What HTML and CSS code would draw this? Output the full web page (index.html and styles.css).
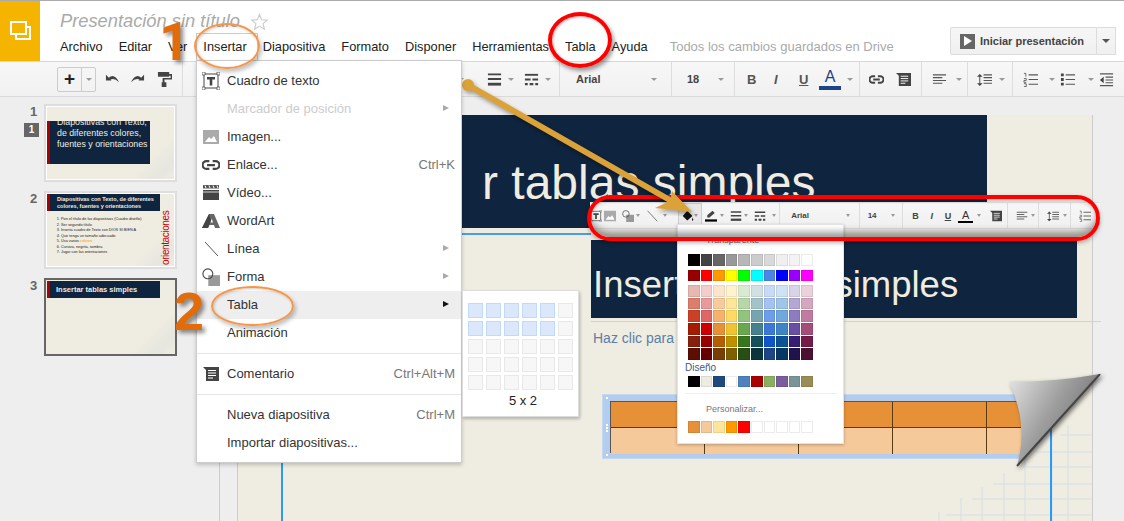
FILE: index.html
```html
<!DOCTYPE html>
<html>

<head>
    <meta charset="utf-8">
    <title>Presentación sin título</title>
    <link rel="stylesheet" href="styles.css">
</head>

<body>

    <svg class="sprites" width="0" height="0">
        <symbol id="i-undo" viewBox="0 0 16 16"><path d="M1 9 L1 3 L7 9 Z M4 6 Q10 1 15 11 Q10 6 6 8 Z" fill="#444"/></symbol>
        <symbol id="i-redo" viewBox="0 0 16 16"><path d="M15 9 L15 3 L9 9 Z M12 6 Q6 1 1 11 Q6 6 10 8 Z" fill="#444"/></symbol>
        <symbol id="i-paint" viewBox="0 0 16 16"><path d="M1 0H13V5H1Z M13 2H16V8H8V11H10V16H5V11H6V6.500H14.500V4H13Z" fill="#444"/></symbol>
        <symbol id="i-link" viewBox="0 0 16 16"><path d="M6.500 4.500H4a3.500 3.500 0 0 0 0 7h2.500 M9.500 4.500H12a3.500 3.500 0 0 1 0 7H9.500 M4.500 8h7" fill="none" stroke="#444" stroke-width="2"/></symbol>
        <symbol id="i-comment" viewBox="0 0 16 16"><path d="M0 1H16V15H3V4Z" fill="#444"/><path d="M5 4.500H13 M5 7H13 M5 9.500H13 M5 12H10" stroke="#fff"/></symbol>
        <symbol id="i-align" viewBox="0 0 16 16"><path d="M1 3H15 M1 6H11 M1 9H15 M1 12H11" stroke="#555" stroke-width="1.200"/></symbol>
        <symbol id="i-spacing" viewBox="0 0 16 16"><path d="M3 2L6 5H0Z M3 15L0 12H6Z M2.500 4H3.500V13H2.500Z" fill="#444"/><path d="M7 3H16 M7 6H16 M7 9H16 M7 12H16" stroke="#555" stroke-width="1.200"/></symbol>
        <symbol id="i-numlist" viewBox="0 0 16 16"><path d="M1 1.500H3V5 M1 7H3.500V9H1V11H3.500 M1 12.500H3.500V15.500H1" fill="none" stroke="#444" stroke-width=".8"/><path d="M6 3H16 M6 8H16 M6 13H16" stroke="#555" stroke-width="1.200"/></symbol>
        <symbol id="i-bullets" viewBox="0 0 16 16"><path d="M1 1.500H4V4.500H1Z M1 6.500H4V9.500H1Z M1 11.500H4V14.500H1Z" fill="#444"/><path d="M6 3H16 M6 8H16 M6 13H16" stroke="#555" stroke-width="1.200"/></symbol>
        <symbol id="i-indent" viewBox="0 0 16 16"><path d="M1 2H15 M7 5.500H15 M7 8.500H15 M7 11.500H15 M1 14.500H15" stroke="#555" stroke-width="1.200"/><path d="M5 5V12L1 8.500Z" fill="#444"/></symbol>
        <symbol id="i-weight" viewBox="0 0 16 16"><path d="M1 2.500H15 M1 7.500H15" stroke="#444" stroke-width="2"/><path d="M1 13H15" stroke="#444" stroke-width="3"/></symbol>
        <symbol id="i-dash" viewBox="0 0 16 16"><path d="M1 3H15" stroke="#444" stroke-width="2"/><path d="M1 8H7 M9 8H15" stroke="#444" stroke-width="2"/><path d="M1 13H4 M6 13H10 M12 13H15" stroke="#444" stroke-width="2.500"/></symbol>
        <symbol id="i-fill" viewBox="0 0 16 16"><path d="M7 1L14 8L7 14L1 8Z" fill="#111"/><path d="M14 10Q16 13 14.500 14.500Q12.500 13.500 14 10Z" fill="#111"/></symbol>
        <symbol id="i-pen" viewBox="0 0 16 16"><path d="M10 1L13 4L6 10H3V7Z" fill="#444"/><path d="M0 12.500H16V15.500H0Z" fill="#000"/></symbol>
        <symbol id="i-image" viewBox="0 0 16 16"><path d="M0 1H16V15H0Z" fill="#aaa"/><path d="M2 13L6 8L8 10L11 7L14 13Z" fill="#fff"/></symbol>
        <symbol id="i-shape" viewBox="0 0 20 20"><path d="M7 8H20V20H7Z" fill="#999"/><circle cx="6.500" cy="6.500" r="5.500" fill="none" stroke="#444" stroke-width="1.200"/></symbol>
        <symbol id="i-line" viewBox="0 0 16 16"><path d="M2 1L15 15" stroke="#555" stroke-width="1"/></symbol>
        <symbol id="i-textbox" viewBox="0 0 18 18"><path d="M2 2H16V16H2Z" fill="none" stroke="#444"/><path d="M0 0H3V3H0Z M15 0H18V3H15Z M0 15H3V18H0Z M15 15H18V18H15Z" fill="#fff" stroke="#444" stroke-width=".7"/><path d="M5 5H13V7.500H10.300V13.500H7.700V7.500H5Z" fill="#444"/></symbol>
        <symbol id="i-video" viewBox="0 0 16 16"><path d="M0 0H16V3.500H0Z" fill="#555"/><path d="M2 .5L3 3M6 .5L7 3M10 .5L11 3M14 .5L15 3" stroke="#fff"/><path d="M0 5H16V15H0Z" fill="#444"/><path d="M0 7H16" stroke="#fff" stroke-width=".8"/></symbol>
        <symbol id="i-wordart" viewBox="0 0 18 16"><path d="M0 15L7 1H12L18 15H13L12 12H7.500L6 15Z" fill="#666"/><path d="M8.500 9.500H11L9.700 5.500Z" fill="#fff"/><path d="M6 15L9 7L7 1L0 15Z" fill="#444"/></symbol>
    </svg>

    <div class="app">
        <header class="header">
            <div class="logo">
                <svg width="22" height="22" viewBox="0 0 22 22"><path d="M2 2H17V14H2Z M17 7H21V19H7V14" fill="none" stroke="#fff" stroke-width="2"/></svg>
            </div>
            <div class="header-main">
                <div class="doc-title">
                    <span class="doc-name">Presentación sin título</span>
                    <svg class="star" width="17" height="17" viewBox="0 0 24 24"><path d="M12 2L15 9.500L23 10L17 15L19 23L12 18.500L5 23L7 15L1 10L9 9.500Z" fill="none" stroke="#ccc" stroke-width="1.600"/></svg>
                </div>
                <nav class="menubar">
                    <span>Archivo</span>
                    <span>Editar</span>
                    <span>Ver</span>
                    <span class="open">Insertar</span>
                    <span>Diapositiva</span>
                    <span>Formato</span>
                    <span>Disponer</span>
                    <span>Herramientas</span>
                    <span>Tabla</span>
                    <span>Ayuda</span>
                    <span class="saved">Todos los cambios guardados en Drive</span>
                </nav>
            </div>
            <div class="present">
                <div class="present-btn">
                    <span class="play"></span>
                    Iniciar presentación
                </div>
                <div class="present-more"><span class="caret dark"></span></div>
            </div>
        </header>

        <div class="toolbar">
            <div class="tgroup g-edit">
                <div class="new-btn">
                    <span class="plus">+</span>
                    <span class="new-more"><span class="caret"></span></span>
                </div>
                <svg class="ico undo"><use href="#i-undo"/></svg>
                <svg class="ico redo"><use href="#i-redo"/></svg>
                <svg class="ico paint"><use href="#i-paint"/></svg>
            </div>
            <div class="tgroup g-insert">
                <span class="tb w14"><svg class="ico"><use href="#i-pen"/></svg></span>
                <span class="tb w28"><span class="caret"></span></span>
                <span class="tb w37"><svg class="ico"><use href="#i-weight"/></svg><span class="caret"></span></span>
                <span class="tb w37"><svg class="ico"><use href="#i-dash"/></svg><span class="caret"></span></span>
            </div>
            <div class="tgroup g-font"><span>Arial</span><span class="caret"></span></div>
            <div class="tgroup g-size"><span>18</span><span class="caret"></span></div>
            <div class="tgroup g-text">
                <b class="fmt">B</b>
                <i class="fmt serif">I</i>
                <u class="fmt">U</u>
                <span class="color-a">A<span class="color-bar"></span></span>
                <span class="caret"></span>
            </div>
            <div class="tgroup g-link">
                <svg class="ico"><use href="#i-link"/></svg>
                <svg class="ico"><use href="#i-comment"/></svg>
            </div>
            <div class="tgroup g-align"><svg class="ico"><use href="#i-align"/></svg><span class="caret"></span></div>
            <div class="tgroup g-spacing"><svg class="ico"><use href="#i-spacing"/></svg><span class="caret"></span></div>
            <div class="tgroup g-lists">
                <span class="tb w37"><svg class="ico"><use href="#i-numlist"/></svg><span class="caret"></span></span>
                <span class="tb w39"><svg class="ico"><use href="#i-bullets"/></svg><span class="caret"></span></span>
                <svg class="ico"><use href="#i-indent"/></svg>
            </div>
        </div>

        <div class="workspace">
            <aside class="filmstrip">
                <div class="film-row">
                    <span class="film-num">1</span>
                    <span class="film-flag">1</span>
                    <div class="thumb">
                        <div class="thumb-band band-one">
                            <p>Diapositivas con Texto,<br>de diferentes colores,<br>fuentes y orientaciones</p>
                        </div>
                    </div>
                </div>
                <div class="film-row">
                    <span class="film-num">2</span>
                    <div class="thumb">
                        <div class="thumb-band band-two">
                            <p>Diapositivas con Texto, de diferentes<br>colores, fuentes y orientaciones</p>
                        </div>
                        <ol class="thumb-list">
                            <li>Pon el título de las diapositivas (Cuadro diseño)</li>
                            <li>Ser segundo título</li>
                            <li>Inserta cuadro de Texto con DIOS SI BIEN A</li>
                            <li>Que tenga un tamaño adecuado</li>
                            <li>Usa varios <em>colores</em></li>
                            <li>Cursiva, negrita, sombra</li>
                            <li>Jugar con las orientaciones</li>
                        </ol>
                        <span class="thumb-side">orientaciones</span>
                    </div>
                </div>
                <div class="film-row">
                    <span class="film-num">3</span>
                    <div class="thumb current">
                        <div class="thumb-band band-three">
                            <p>Insertar tablas simples</p>
                        </div>
                    </div>
                </div>
            </aside>

            <main class="canvas">
                <div class="slide">
                    <div class="band-big">r tablas simples</div>
                    <div class="guide-h"></div>
                    <div class="band-small">Insertar tablas simples</div>
                    <div class="rule"></div>
                    <div class="placeholder">Haz clic para añadir texto</div>
                    <svg class="grid" width="160" height="110" viewBox="0 0 160 110">
                        <path d="M129 10H160 M104 27H160 M91 42H160 M61 59H160 M40 74H160 M14 90H160 M136 0V110 M120 10V110 M93 28V110 M72 48V110 M50 62V110 M29 73V110 M7 87V110" stroke="#d5dfe4" fill="none"/>
                    </svg>
                    <div class="guide-v left"></div>
                    <div class="guide-v right"></div>
                    <div class="table-frame">
                        <div class="table-grid">
                            <span class="th"></span><span class="th"></span><span class="th"></span><span class="th"></span><span class="th"></span>
                            <span class="td"></span><span class="td"></span><span class="td"></span><span class="td"></span><span class="td"></span>
                        </div>
                    </div>
                </div>
            </main>
        </div>

        <svg class="curl" width="100" height="104" viewBox="0 0 100 104">
            <defs>
                <linearGradient id="curlfill" x1="0" y1="0" x2="1" y2="0.6">
                    <stop offset="0" stop-color="#e6e6e6"/>
                    <stop offset="0.5" stop-color="#a0a0a0"/>
                    <stop offset="1" stop-color="#666"/>
                </linearGradient>
            </defs>
            <path d="M8 8Q54 8 99 0L16 92Q28 50 8 8Z" fill="url(#curlfill)"/>
            <path d="M99 0L16 92" stroke="#444" stroke-width="2"/>
        </svg>

        <div class="mini-toolbar">
            <span class="mb w11"><svg class="mico"><use href="#i-textbox"/></svg></span>
            <span class="mb w18"><svg class="mico"><use href="#i-image"/></svg></span>
            <span class="mb w24"><svg class="mico"><use href="#i-shape"/></svg><span class="caret"></span></span>
            <span class="mb w27"><svg class="mico"><use href="#i-line"/></svg><span class="caret"></span></span>
            <span class="mb w24 pressed"><svg class="mico"><use href="#i-fill"/></svg><span class="caret"></span></span>
            <span class="mb w25"><svg class="mico"><use href="#i-pen"/></svg><span class="caret"></span></span>
            <span class="mb w25"><svg class="mico"><use href="#i-weight"/></svg><span class="caret"></span></span>
            <span class="mb w29 sep"><svg class="mico"><use href="#i-dash"/></svg><span class="caret"></span></span>
            <span class="mb mfont sep"><span>Arial</span><span class="caret"></span></span>
            <span class="mb msize sep"><span>14</span><span class="caret"></span></span>
            <span class="mb mtext sep">
                <b class="mfmt">B</b><i class="mfmt">I</i><u class="mfmt">U</u>
                <span class="color-a mini">A<span class="color-bar"></span></span>
                <span class="caret"></span>
                <svg class="mico mcomment"><use href="#i-comment"/></svg>
            </span>
            <span class="mb w32 sep"><svg class="mico ml"><use href="#i-align"/></svg><span class="caret"></span></span>
            <span class="mb w32 sep"><svg class="mico ml"><use href="#i-spacing"/></svg><span class="caret"></span></span>
            <span class="mb w29"><svg class="mico ml"><use href="#i-numlist"/></svg></span>
        </div>

        <div class="palette">
            <div class="pal-none">Transparente</div>
            <div class="swatches">
                <i style="background:#000"></i><i style="background:#434343"></i><i style="background:#666"></i><i style="background:#999"></i><i style="background:#b7b7b7"></i><i style="background:#ccc"></i><i style="background:#d9d9d9"></i><i style="background:#efefef"></i><i style="background:#f3f3f3"></i><i style="background:#fff"></i>
            </div>
            <div class="swatches bright">
                <i style="background:#980000"></i><i style="background:#f00"></i><i style="background:#f90"></i><i style="background:#ff0"></i><i style="background:#0f0"></i><i style="background:#0ff"></i><i style="background:#4a86e8"></i><i style="background:#00f"></i><i style="background:#90f"></i><i style="background:#f0f"></i>
            </div>
            <div class="swatches tints">
                <i style="background:#e6b8af"></i><i style="background:#f4cccc"></i><i style="background:#fce5cd"></i><i style="background:#fff2cc"></i><i style="background:#d9ead3"></i><i style="background:#d0e0e3"></i><i style="background:#c9daf8"></i><i style="background:#cfe2f3"></i><i style="background:#d9d2e9"></i><i style="background:#ead1dc"></i>
                <i style="background:#dd7e6b"></i><i style="background:#ea9999"></i><i style="background:#f9cb9c"></i><i style="background:#ffe599"></i><i style="background:#b6d7a8"></i><i style="background:#a2c4c9"></i><i style="background:#a4c2f4"></i><i style="background:#9fc5e8"></i><i style="background:#b4a7d6"></i><i style="background:#d5a6bd"></i>
                <i style="background:#cc4125"></i><i style="background:#e06666"></i><i style="background:#f6b26b"></i><i style="background:#ffd966"></i><i style="background:#93c47d"></i><i style="background:#76a5af"></i><i style="background:#6d9eeb"></i><i style="background:#6fa8dc"></i><i style="background:#8e7cc3"></i><i style="background:#c27ba0"></i>
                <i style="background:#a61c00"></i><i style="background:#c00"></i><i style="background:#e69138"></i><i style="background:#f1c232"></i><i style="background:#6aa84f"></i><i style="background:#45818e"></i><i style="background:#3c78d8"></i><i style="background:#3d85c6"></i><i style="background:#674ea7"></i><i style="background:#a64d79"></i>
                <i style="background:#85200c"></i><i style="background:#900"></i><i style="background:#b45f06"></i><i style="background:#bf9000"></i><i style="background:#38761d"></i><i style="background:#134f5c"></i><i style="background:#1155cc"></i><i style="background:#0b5394"></i><i style="background:#351c75"></i><i style="background:#741b47"></i>
                <i style="background:#5b0f00"></i><i style="background:#600"></i><i style="background:#783f04"></i><i style="background:#7f6000"></i><i style="background:#274e13"></i><i style="background:#0c343d"></i><i style="background:#1c4587"></i><i style="background:#073763"></i><i style="background:#20124d"></i><i style="background:#4c1130"></i>
            </div>
            <div class="pal-label">Diseño</div>
            <div class="swatches">
                <i style="background:#000"></i><i style="background:#eeece1"></i><i style="background:#1f497d"></i><i style="background:#fff"></i><i style="background:#4f81bd"></i><i style="background:#a00"></i><i style="background:#8ab060"></i><i style="background:#7a5f9f"></i><i style="background:#7a9597"></i><i style="background:#9a8c55"></i>
            </div>
            <div class="pal-sep"></div>
            <div class="pal-custom">Personalizar...</div>
            <div class="swatches">
                <i style="background:#e69138"></i><i style="background:#f6c99b"></i><i style="background:#ffe599"></i><i style="background:#f90"></i><i style="background:#f00"></i><i style="background:#fff"></i><i style="background:#fff"></i><i style="background:#fff"></i><i style="background:#fff"></i><i style="background:#fff"></i>
            </div>
        </div>

        <div class="red-oval toolbar-oval"></div>

        <svg class="arrow" width="240" height="140" viewBox="0 0 240 140">
            <g class="arrow-body">
                <path d="M8 9L215 127" stroke="#dba23a" stroke-width="6" stroke-linecap="round"/>
                <circle cx="8" cy="9" r="6" fill="#dba23a"/>
                <path d="M232 136L195 132L210 125L212 115Z" fill="#dba23a"/>
            </g>
        </svg>

        <div class="insert-menu">
            <div class="mi"><svg class="mi-ico"><use href="#i-textbox"/></svg>Cuadro de texto</div>
            <div class="mi disabled">Marcador de posición<span class="sub-arrow"></span></div>
            <div class="mi"><svg class="mi-ico small"><use href="#i-image"/></svg>Imagen...</div>
            <div class="mi"><svg class="mi-ico"><use href="#i-link"/></svg>Enlace...<span class="key">Ctrl+K</span></div>
            <div class="mi"><svg class="mi-ico small"><use href="#i-video"/></svg>Vídeo...</div>
            <div class="mi"><svg class="mi-ico"><use href="#i-wordart"/></svg>WordArt</div>
            <div class="mi"><svg class="mi-ico small"><use href="#i-line"/></svg>Línea<span class="sub-arrow"></span></div>
            <div class="mi"><svg class="mi-ico"><use href="#i-shape"/></svg>Forma<span class="sub-arrow"></span></div>
            <div class="mi active">Tabla<span class="sub-arrow"></span></div>
            <div class="mi">Animación</div>
            <div class="menu-sep"></div>
            <div class="mi"><svg class="mi-ico small"><use href="#i-comment"/></svg>Comentario<span class="key">Ctrl+Alt+M</span></div>
            <div class="menu-sep"></div>
            <div class="mi">Nueva diapositiva<span class="key">Ctrl+M</span></div>
            <div class="mi">Importar diapositivas...</div>
        </div>

        <div class="table-picker">
            <div class="cells">
                <i class="on"></i><i class="on"></i><i class="on"></i><i class="on"></i><i class="on"></i><i></i>
                <i class="on"></i><i class="on"></i><i class="on"></i><i class="on"></i><i class="on"></i><i></i>
                <i></i><i></i><i></i><i></i><i></i><i></i>
                <i></i><i></i><i></i><i></i><i></i><i></i>
                <i></i><i></i><i></i><i></i><i></i><i></i>
            </div>
            <div class="picker-size">5 x 2</div>
        </div>

        <span class="step step-one">1</span>
        <span class="step step-two">2</span>
        <div class="orange-oval oval-insertar"></div>
        <div class="orange-oval oval-tabla"></div>
        <div class="red-oval oval-menu-tabla"></div>
    </div>

</body>

</html>
```

FILE: styles.css
```css
body {
    margin: 0;
    font-family: "Liberation Sans", Arial, sans-serif;
    background-color: #eee;
    overflow: hidden;
}

.sprites {
    position: absolute;
}

.app {
    position: relative;
    width: 1124px;
    height: 521px;
    overflow: hidden;
    border-top: 1px solid #aaa;
    box-sizing: border-box;
    display: flex;
    flex-direction: column;
}

/* header */
.header {
    display: flex;
    height: 60px;
    background-color: #fff;
    flex-shrink: 0;
}

.logo {
    width: 40px;
    background-color: #f4b400;
    display: flex;
    align-items: center;
    justify-content: center;
}

.header-main {
    padding-left: 20px;
    width: 890px;
}

.doc-title {
    display: flex;
    align-items: center;
    gap: 11px;
    height: 38px;
    padding-top: 2px;
    box-sizing: border-box;
}

.doc-name {
    font-size: 18.3px;
    font-style: italic;
    color: #aaa;
}

.menubar {
    display: flex;
    gap: 16px;
    font-size: 12.8px;
    color: #222;
    line-height: 15px;
}

.menubar .open {
    color: #222;
    position: relative;
}

.menubar .open::before {
    content: "";
    position: absolute;
    left: -7px;
    right: -11px;
    top: -6px;
    height: 28px;
    border: 1px solid #ccc;
    border-bottom: none;
}

.menubar .saved {
    margin-left: 6px;
    color: #aaa;
    font-size: 13px;
}

.present {
    display: flex;
    margin-top: 26px;
    height: 28px;
}

.present-btn {
    width: 147px;
    box-sizing: border-box;
    display: flex;
    align-items: center;
    gap: 5px;
    padding-left: 9px;
    font-size: 11px;
    font-weight: bold;
    color: #444;
    background: linear-gradient(#f6f6f6, #f0f0f0);
    border: 1px solid #dcdcdc;
    border-radius: 2px 0 0 2px;
}

.play {
    width: 15px;
    height: 15px;
    background-color: #666;
    position: relative;
    flex-shrink: 0;
}

.play::after {
    content: "";
    position: absolute;
    left: 4px;
    top: 2.5px;
    border-left: 8px solid #fff;
    border-top: 5px solid transparent;
    border-bottom: 5px solid transparent;
}

.present-more {
    width: 19px;
    box-sizing: border-box;
    display: flex;
    align-items: center;
    justify-content: center;
    background: linear-gradient(#f6f6f6, #f0f0f0);
    border: 1px solid #dcdcdc;
    border-left: none;
}

.caret {
    display: inline-block;
    width: 0;
    height: 0;
    border-left: 3px solid transparent;
    border-right: 3px solid transparent;
    border-top: 3px solid #999;
    flex-shrink: 0;
}

.caret.dark {
    border-top-color: #555;
    border-left-width: 4px;
    border-right-width: 4px;
    border-top-width: 4px;
}

/* toolbar */
.toolbar {
    display: flex;
    height: 36px;
    box-sizing: border-box;
    padding-left: 57px;
    background: linear-gradient(#f7f7f7, #f1f1f1);
    border-top: 1px solid #d9d9d9;
    border-bottom: 1px solid #d9d9d9;
    flex-shrink: 0;
    font-size: 11px;
    color: #333;
}

.tgroup {
    display: flex;
    align-items: center;
    box-sizing: border-box;
    height: 100%;
    border-right: 1px solid #ddd;
}

.ico {
    width: 15px;
    height: 15px;
    flex-shrink: 0;
}

.g-edit {
    width: 126px;
}

.new-btn {
    display: flex;
    width: 39px;
    height: 25px;
    box-sizing: border-box;
    border: 1px solid #ccc;
    border-radius: 2px;
}

.plus {
    flex: 1;
    text-align: center;
    font-size: 19px;
    line-height: 21px;
    font-weight: bold;
    color: #222;
}

.new-more {
    width: 13px;
    display: flex;
    align-items: center;
    justify-content: center;
    border-left: 1px solid #ccc;
}

.undo {
    margin-left: 9px;
}

.redo {
    margin-left: 10px;
}

.paint {
    margin-left: 12px;
}

.g-insert {
    width: 377px;
    justify-content: flex-end;
    padding-right: 3px;
}

.tb {
    display: flex;
    align-items: center;
    justify-content: space-between;
    box-sizing: border-box;
    padding-right: 5px;
}

.g-insert .w37 {
    padding-left: 5px;
}

.w14 { width: 14px; padding: 0; }
.w28 { width: 24px; }
.w37 { width: 37px; }
.w39 { width: 39px; }

.g-font {
    width: 112px;
    padding: 0 14px 0 16px;
    justify-content: space-between;
    font-weight: bold;
    color: #444;
}

.g-size {
    width: 63px;
    padding: 0 10px 0 15px;
    justify-content: space-between;
    font-weight: bold;
    color: #444;
}

.g-text {
    width: 125px;
    padding-left: 12px;
    font-size: 14px;
    color: #555;
}

.fmt {
    width: 26px;
    text-align: left;
    font-size: 13px;
    font-style: normal;
    font-weight: bold;
}

i.fmt {
    font-style: italic;
    text-indent: 1px;
}

.color-a {
    position: relative;
    width: 22px;
    margin: 0 6px 0 -6px;
    font-size: 16px;
    line-height: 18px;
    text-align: center;
    color: #1c4587;
}

.color-bar {
    display: block;
    height: 4px;
    background-color: #1c4587;
}

.g-link {
    width: 62px;
    padding-left: 9px;
    gap: 12px;
}

.g-align {
    width: 46px;
    padding-left: 10px;
    gap: 9px;
}

.g-spacing {
    width: 45px;
    padding-left: 9px;
    gap: 7px;
}

.g-lists {
    border-right: none;
    padding-left: 10px;
}

/* left strip */
.workspace {
    display: flex;
    flex: 1;
    min-height: 0;
}

.filmstrip {
    width: 196px;
    box-sizing: border-box;
    padding: 7px 0 0 44px;
    flex-shrink: 0;
    position: relative;
}

.film-row {
    position: relative;
    height: 87px;
}

.film-num {
    position: absolute;
    left: -14px;
    top: 0;
    font-size: 13px;
    font-weight: bold;
    color: #666;
}

.film-flag {
    position: absolute;
    left: -20px;
    top: 19px;
    width: 15px;
    height: 14px;
    background-color: #666;
    color: #fff;
    font-size: 10px;
    font-weight: bold;
    line-height: 14px;
    text-align: center;
}

.thumb {
    position: relative;
    width: 133px;
    height: 78px;
    box-sizing: border-box;
    border: 2px solid #ddd;
    outline: 1px solid #fff;
    outline-offset: -3px;
    background: linear-gradient(135deg, #efece1 78%, #e6e6df 90%, #efece1);
    overflow: hidden;
}

.thumb.current {
    border-color: #666;
    outline: none;
}

.thumb-band {
    background-color: #0f243e;
    border-left: 3px solid #a00;
    box-sizing: border-box;
    color: #efece1;
}

.thumb-band p {
    margin: 0;
}

.band-one {
    width: 103px;
    height: 43px;
    margin: 15px 0 0 1px;
    overflow: hidden;
    font-size: 8.8px;
    line-height: 11px;
    padding-left: 7px;
    white-space: nowrap;
}

.band-one p {
    margin-top: -4px;
}

.band-two {
    width: 113px;
    height: 17px;
    margin: 1px 0 0 1px;
    padding: 2px 0 0 7px;
    font-size: 5.5px;
    line-height: 6.5px;
    font-weight: bold;
}

.band-three {
    width: 113px;
    height: 17px;
    margin: 1px 0 0 1px;
    padding-left: 6px;
    font-size: 7.5px;
    line-height: 17px;
    font-weight: bold;
}

.thumb-list {
    margin: 6px 0 0;
    padding-left: 15px;
    font-size: 3.8px;
    line-height: 5.5px;
    color: #222;
}

.thumb-list em {
    color: #f90;
    font-style: normal;
}

.thumb-side {
    position: absolute;
    right: -21px;
    top: 37px;
    font-size: 10px;
    line-height: 10px;
    color: #c00;
    transform: rotate(-90deg);
    width: 60px;
    letter-spacing: -.4px;
    white-space: nowrap;
}

/* slide */
.canvas {
    position: relative;
    flex: 1;
}

.canvas::before {
    content: "";
    position: absolute;
    left: 23px;
    top: 0;
    bottom: 0;
    border-left: 1px solid #ccc;
}

.slide {
    position: absolute;
    left: 41px;
    top: 18px;
    width: 856px;
    height: 420px;
    background-color: #efece1;
    border-left: 1px solid #ccc;
    border-right: 1px solid #ccc;
    box-sizing: border-box;
}

.band-big {
    position: absolute;
    left: 98px;
    top: 0;
    width: 651px;
    height: 113px;
    box-sizing: border-box;
    padding-left: 146px;
    background-color: #0f243e;
    color: #efece1;
    font-size: 48px;
    line-height: 136px;
    white-space: nowrap;
}

.band-small {
    position: absolute;
    left: 353px;
    top: 125px;
    width: 486px;
    height: 78px;
    box-sizing: border-box;
    padding-left: 2px;
    background-color: #0f243e;
    color: #efece1;
    font-size: 36.5px;
    line-height: 90px;
    white-space: nowrap;
}

.guide-h {
    position: absolute;
    left: 0;
    top: 118px;
    width: 353px;
    height: 2px;
    background-color: #4a9be8;
}

.rule {
    position: absolute;
    left: 353px;
    top: 206px;
    width: 510px;
    height: 1px;
    background-color: #cdd3d8;
}

.placeholder {
    position: absolute;
    left: 355px;
    top: 215px;
    font-size: 14px;
    color: #5b7fa6;
    white-space: nowrap;
}

.grid {
    position: absolute;
    right: 0;
    bottom: 0;
}

.guide-v {
    position: absolute;
    width: 2px;
    background-color: #2b9af3;
}

.guide-v.left {
    left: 43px;
    top: 118px;
    bottom: 0;
}

.guide-v.right {
    left: 812px;
    top: 300px;
    bottom: 0;
}

.table-frame {
    position: absolute;
    left: 364px;
    top: 279px;
    width: 420px;
    height: 65px;
    box-sizing: border-box;
    padding: 6px 0 6px 7px;
    background-color: #b3cdee;
    border: 1px solid #c6d8ef;
    overflow: hidden;
}

/* selection handles */
.table-frame::before {
    content: "";
    position: absolute;
    left: 3px;
    top: 2px;
    width: 2px;
    height: 2px;
    background-color: #fff;
    box-shadow: 0 27px #fff, 0 30px #fff, 0 33px #fff, 0 57px #fff;
}

.table-grid {
    display: grid;
    grid-template-columns: repeat(5, 94px);
    grid-template-rows: 26px 26px;
    height: 52px;
    width: 470px;
    border: 1px solid #555;
    border-right: none;
    box-sizing: border-box;
}

.th {
    background-color: #e69138;
    border-right: 1px solid #5a3a10;
    border-bottom: 1px solid #5a3a10;
}

.td {
    background-color: #f6c99b;
    border-right: 1px solid #5a3a10;
}

/* overlays */
.curl {
    position: absolute;
    left: 1001px;
    top: 373px;
    filter: drop-shadow(2px 2px 2px rgba(0, 0, 0, .5));
}

.mini-toolbar {
    position: absolute;
    left: 590px;
    top: 201px;
    width: 510px;
    height: 25px;
    display: flex;
    align-items: center;
    background: linear-gradient(#f7f7f7, #f0f0f0);
    border-top: 1px solid #e2e2e2;
    border-bottom: 1px solid #ddd;
    font-size: 8px;
    color: #444;
}

.mb {
    display: flex;
    align-items: center;
    justify-content: space-between;
    box-sizing: border-box;
    height: 25px;
    padding: 0 3px;
}

.mb.sep {
    border-right: 1px solid #ddd;
}

.mb .caret {
    border-left-width: 2.5px;
    border-right-width: 2.5px;
}

.mico {
    width: 12px;
    height: 12px;
    flex-shrink: 0;
}

.ml {
    margin-left: 5px;
}

.w11 { width: 11px; padding: 0; }
.w18 { width: 18px; }
.w24 { width: 24px; }
.w25 { width: 25px; }
.w27 { width: 27px; margin-right: 8px; }
.w29 { width: 29px; }
.w32 { width: 32px; }

.pressed {
    background-color: #e8e8e8;
    border: 1px solid #ccc;
}

.mfont {
    width: 80px;
    padding: 0 9px 0 11px;
    font-weight: bold;
}

.msize {
    width: 44px;
    padding: 0 7px 0 8px;
    font-weight: bold;
}

.mtext {
    width: 105px;
    padding: 0 5px 0 6px;
}

.mfmt {
    font-size: 9px;
    font-weight: bold;
    width: 12px;
    text-align: center;
}

.color-a.mini {
    width: 15px;
    margin: 0;
    font-size: 11px;
    line-height: 12px;
    color: #333;
}

.color-a.mini .color-bar {
    height: 2px;
    background-color: #000;
}

.mcomment {
    margin-left: 4px;
}

.palette {
    position: absolute;
    left: 677px;
    top: 223px;
    width: 167px;
    height: 220px;
    box-sizing: border-box;
    padding: 0 10px;
    background-color: #fff;
    border: 1px solid #e4e4e4;
    box-shadow: 0 1px 3px rgba(0, 0, 0, .25);
    font-size: 9px;
    color: #666;
}

.pal-none {
    height: 29px;
    padding: 10px 0 0 18px;
    box-sizing: border-box;
}

.swatches {
    display: grid;
    grid-template-columns: repeat(10, 11.6px);
    grid-auto-rows: 11.6px;
    gap: 1px;
}

.swatches i {
    display: block;
    box-sizing: border-box;
    border: 1px solid rgba(0, 0, 0, .08);
}

.swatches.bright {
    margin-top: 4px;
}

.swatches.tints {
    margin-top: 4px;
}

.pal-label {
    height: 16px;
    padding-top: 2px;
    margin-left: -3px;
    box-sizing: border-box;
    font-size: 10px;
    color: #3d5a80;
}

.pal-sep {
    margin: 6px 0 0 -2px;
    width: 151px;
    height: 1px;
    background-color: #eee;
}

.pal-custom {
    height: 27px;
    padding: 10px 0 0 18px;
    box-sizing: border-box;
    color: #777;
}

.red-oval {
    position: absolute;
    box-sizing: border-box;
    border: 4px solid #f00;
}

.toolbar-oval {
    left: 587px;
    top: 194px;
    width: 513px;
    height: 46px;
    border-radius: 24px;
    box-shadow: 0 2px 4px rgba(0, 0, 0, .3), inset 0 -8px 7px -3px rgba(0, 0, 0, .4), inset 0 4px 4px -2px rgba(0, 0, 0, .2);
}

.oval-menu-tabla {
    left: 548px;
    top: 11px;
    width: 64px;
    height: 56px;
    border-radius: 50%;
    box-shadow: 2px 3px 4px rgba(0, 0, 0, .4), inset 1px 1px 3px rgba(0, 0, 0, .3);
}

.arrow {
    position: absolute;
    left: 460px;
    top: 75px;
}

.arrow-body {
    filter: drop-shadow(2px 3px 2px rgba(0, 0, 0, .35));
}

.insert-menu {
    position: absolute;
    left: 196px;
    top: 59px;
    width: 266px;
    height: 403px;
    box-sizing: border-box;
    padding: 6px 0;
    background-color: #fff;
    border: 1px solid #ccc;
    box-shadow: 0 2px 4px rgba(0, 0, 0, .2);
    font-size: 13px;
    color: #333;
}

.mi {
    position: relative;
    height: 28px;
    line-height: 28px;
    padding-left: 30px;
}

.mi.disabled {
    color: #ccc;
}

.mi.active {
    background-color: #eee;
}

.mi-ico {
    position: absolute;
    left: 5px;
    top: 5px;
    width: 18px;
    height: 18px;
}

.mi-ico.small {
    left: 6px;
    top: 6px;
    width: 16px;
    height: 16px;
}

.key {
    position: absolute;
    right: 6px;
    color: #777;
}

.sub-arrow {
    position: absolute;
    right: 12px;
    top: 10px;
    width: 0;
    height: 0;
    border-left: 6px solid #aaa;
    border-top: 3.5px solid transparent;
    border-bottom: 3.5px solid transparent;
}

.mi.active .sub-arrow {
    border-left-color: #111;
}

.menu-sep {
    margin: 6px 0;
    height: 1px;
    background-color: #e6e6e6;
}

.table-picker {
    position: absolute;
    left: 462px;
    top: 289px;
    width: 117px;
    height: 127px;
    box-sizing: border-box;
    padding: 12px 0 0 5px;
    background-color: #fff;
    border: 1px solid #ddd;
    box-shadow: 1px 2px 3px rgba(0, 0, 0, .25);
}

.cells {
    display: grid;
    grid-template-columns: repeat(6, 15px);
    grid-auto-rows: 15px;
    gap: 3px;
}

.cells i {
    display: block;
    box-sizing: border-box;
    background-color: #f7f7f7;
    border: 1px solid #e8e8e8;
}

.cells i.on {
    background-color: #dbe8fb;
    border-color: #c3d9f9;
}

.picker-size {
    margin-top: 3px;
    text-align: center;
    font-size: 13px;
    line-height: 16px;
    color: #222;
}

.step {
    position: absolute;
    font-weight: bold;
    font-size: 54px;
    line-height: 54px;
    color: #e36c0a;
    text-shadow: 3px 3px 4px rgba(0, 0, 0, .45);
}

.step-one {
    font-family: Roboto, "Liberation Sans", sans-serif;
    left: 159px;
    top: 14px;
}

.step-two {
    left: 174px;
    top: 283px;
}

.orange-oval {
    position: absolute;
    box-sizing: border-box;
    border: 2px solid #f79646;
    border-radius: 50%;
    box-shadow: 2px 3px 4px rgba(0, 0, 0, .25), inset 1px 1px 3px rgba(0, 0, 0, .2);
}

.oval-insertar {
    left: 194px;
    top: 22px;
    width: 66px;
    height: 46px;
}

.oval-tabla {
    left: 211px;
    top: 285px;
    width: 83px;
    height: 40px;
}
```
